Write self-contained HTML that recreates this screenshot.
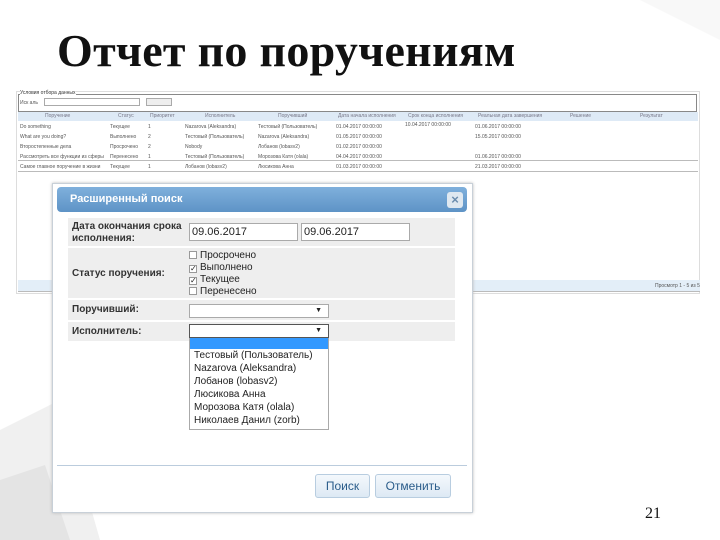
<!DOCTYPE html>
<html><head><meta charset="utf-8"><style>
*{margin:0;padding:0;box-sizing:border-box}
body{width:720px;height:540px;position:relative;overflow:hidden;background:#fff;font-family:"Liberation Sans",sans-serif}
.abs{position:absolute}
.title{left:57px;top:24px;font:bold 46px "Liberation Serif","Noto Serif CJK SC",serif;color:#111;letter-spacing:0.3px}
.t{font-size:5px;color:#555;white-space:nowrap}
.lbl{font-size:10px;color:#333;font-weight:bold}
.inp{background:#fff;border:1px solid #aaa;font-size:11px;color:#222;padding:2px 2px}
.cb{font-size:10px;color:#222;line-height:12px}
.cb span{display:inline-block;width:8px;height:8px;border:1px solid #999;background:#fff;margin-right:3px;vertical-align:-1px;font-size:8px;line-height:6px;text-align:center}
.opt{font-size:10px;color:#222;line-height:13px;padding-left:4px}
.btn{border:1px solid #b8cde0;border-radius:3px;background:linear-gradient(#f4f8fc,#dde9f4);color:#2a5c8a;font-size:12px;text-align:center;line-height:22px}
</style></head><body>
<svg class="abs" style="left:0;top:0" width="720" height="540">
<polygon points="0,430 60,400 100,540 0,540" fill="#f0f0f0"/>
<polygon points="0,480 45,465 70,540 0,540" fill="#e4e4e4"/>
<polygon points="640,0 720,0 720,40" fill="#f8f8f8"/>
</svg>
<div class="abs title">Отчет по поручениям</div>
<div class="abs" style="left:16px;top:91px;width:684px;height:203px;border:1px solid #ddd;background:#fff"></div>
<div class="abs" style="left:18px;top:94px;width:679px;height:18px;border:1px solid #888"></div>
<div class="abs t" style="left:20px;top:90px;background:#fff;color:#333">Условия отбора данных</div>
<div class="abs t" style="left:20px;top:100px">Иск аль</div>
<div class="abs" style="left:44px;top:98px;width:96px;height:8px;border:1px solid #aaa"></div>
<div class="abs" style="left:146px;top:98px;width:26px;height:8px;border:1px solid #aaa;background:#eee"></div>
<div class="abs" style="left:18px;top:112px;width:680px;height:9px;background:#deeaf6"></div>
<div class="abs t" style="left:45px;top:113px;color:#778">Поручение</div>
<div class="abs t" style="left:118px;top:113px;color:#778">Статус</div>
<div class="abs t" style="left:150px;top:113px;color:#778">Приоритет</div>
<div class="abs t" style="left:205px;top:113px;color:#778">Исполнитель</div>
<div class="abs t" style="left:278px;top:113px;color:#778">Поручивший</div>
<div class="abs t" style="left:338px;top:113px;color:#778">Дата начала исполнения</div>
<div class="abs t" style="left:408px;top:113px;color:#778">Срок конца исполнения</div>
<div class="abs t" style="left:478px;top:113px;color:#778">Реальная дата завершения</div>
<div class="abs t" style="left:570px;top:113px;color:#778">Решение</div>
<div class="abs t" style="left:640px;top:113px;color:#778">Результат</div>
<div class="abs" style="left:18px;top:121px;width:680px;height:51px;border-bottom:1px solid #bbb"></div>
<div class="abs" style="left:18px;top:160px;width:680px;height:1px;background:#bbb"></div>
<div class="abs t" style="left:20px;top:122px;line-height:10px">Do something<br>What are you doing?<br>Второстепенные дела<br>Рассмотреть все функции из сферы<br>Самое главное поручение в жизни</div>
<div class="abs t" style="left:110px;top:122px;line-height:10px">Текущее<br>Выполнено<br>Просрочено<br>Перенесено<br>Текущее</div>
<div class="abs t" style="left:148px;top:122px;line-height:10px">1<br>2<br>2<br>1<br>1</div>
<div class="abs t" style="left:185px;top:122px;line-height:10px">Nazarova (Aleksandra)<br>Тестовый (Пользователь)<br>Nobody<br>Тестовый (Пользователь)<br>Лобанов (lobasv2)</div>
<div class="abs t" style="left:258px;top:122px;line-height:10px">Тестовый (Пользователь)<br>Nazarova (Aleksandra)<br>Лобанов (lobasv2)<br>Морозова Катя (olala)<br>Люсикова Анна</div>
<div class="abs t" style="left:336px;top:122px;line-height:10px">01.04.2017 00:00:00<br>01.05.2017 00:00:00<br>01.02.2017 00:00:00<br>04.04.2017 00:00:00<br>01.03.2017 00:00:00</div>
<div class="abs t" style="left:405px;top:122px">10.04.2017 00:00:00</div>
<div class="abs t" style="left:475px;top:122px;line-height:10px">01.06.2017 00:00:00<br>15.05.2017 00:00:00<br>&nbsp;<br>01.06.2017 00:00:00<br>21.03.2017 00:00:00</div>
<div class="abs" style="left:18px;top:280px;width:682px;height:12px;background:#e3eef8;border-bottom:1px solid #bbb"></div>
<div class="abs t" style="left:655px;top:283px">Просмотр 1 - 5 из 5</div>
<div class="abs" style="left:52px;top:183px;width:421px;height:330px;background:#fff;border:1px solid #c8d0d8;box-shadow:0 0 3px #bbb"></div>
<div class="abs" style="left:57px;top:187px;width:410px;height:25px;border-radius:4px;background:linear-gradient(#7fb0dc,#5e93c6)"></div>
<div class="abs" style="left:70px;top:193px;color:#fff;font-weight:bold;font-size:11px">Расширенный поиск</div>
<div class="abs" style="left:447px;top:192px;width:16px;height:16px;border-radius:3px;background:#dfe8f0;color:#6a8cad;font-size:13px;font-weight:bold;text-align:center;line-height:16px">×</div>
<div class="abs" style="left:68px;top:218px;width:387px;height:28px;background:#eee"></div>
<div class="abs" style="left:68px;top:248px;width:387px;height:50px;background:#eee"></div>
<div class="abs" style="left:68px;top:300px;width:387px;height:20px;background:#eee"></div>
<div class="abs" style="left:68px;top:322px;width:387px;height:19px;background:#eee"></div>
<div class="abs lbl" style="left:72px;top:221px;line-height:12px">Дата окончания срока<br>исполнения:</div>
<div class="abs inp" style="left:189px;top:223px;width:109px;height:18px;line-height:13px">09.06.2017</div>
<div class="abs inp" style="left:301px;top:223px;width:109px;height:18px;line-height:13px">09.06.2017</div>
<div class="abs lbl" style="left:72px;top:268px">Статус поручения:</div>
<div class="abs cb" style="left:189px;top:250px"><span></span>Просрочено<br><span>✓</span>Выполнено<br><span>✓</span>Текущее<br><span></span>Перенесено</div>
<div class="abs lbl" style="left:72px;top:304px">Поручивший:</div>
<div class="abs inp" style="left:189px;top:304px;width:140px;height:14px;font-size:7px;text-align:right;line-height:8px;padding-right:6px">▼</div>
<div class="abs lbl" style="left:72px;top:326px">Исполнитель:</div>
<div class="abs inp" style="left:189px;top:324px;width:140px;height:14px;font-size:7px;text-align:right;line-height:8px;padding-right:6px;border-color:#555">▼</div>
<div class="abs" style="left:189px;top:338px;width:140px;height:92px;border:1px solid #aaa;border-top:none;background:#fff;overflow:hidden">
<div style="height:11px;background:#3399ff"></div>
<div class="opt">Тестовый (Пользователь)<br>Nazarova (Aleksandra)<br>Лобанов (lobasv2)<br>Люсикова Анна<br>Морозова Катя (olala)<br>Николаев Данил (zorb)</div>
</div>
<div class="abs" style="left:57px;top:465px;width:410px;height:1px;background:#bcd"></div>
<div class="abs btn" style="left:315px;top:474px;width:55px;height:24px">Поиск</div>
<div class="abs btn" style="left:375px;top:474px;width:76px;height:24px">Отменить</div>
<div class="abs" style="left:645px;top:505px;font:16px 'Liberation Serif',serif;color:#111">21</div>
</body></html>
